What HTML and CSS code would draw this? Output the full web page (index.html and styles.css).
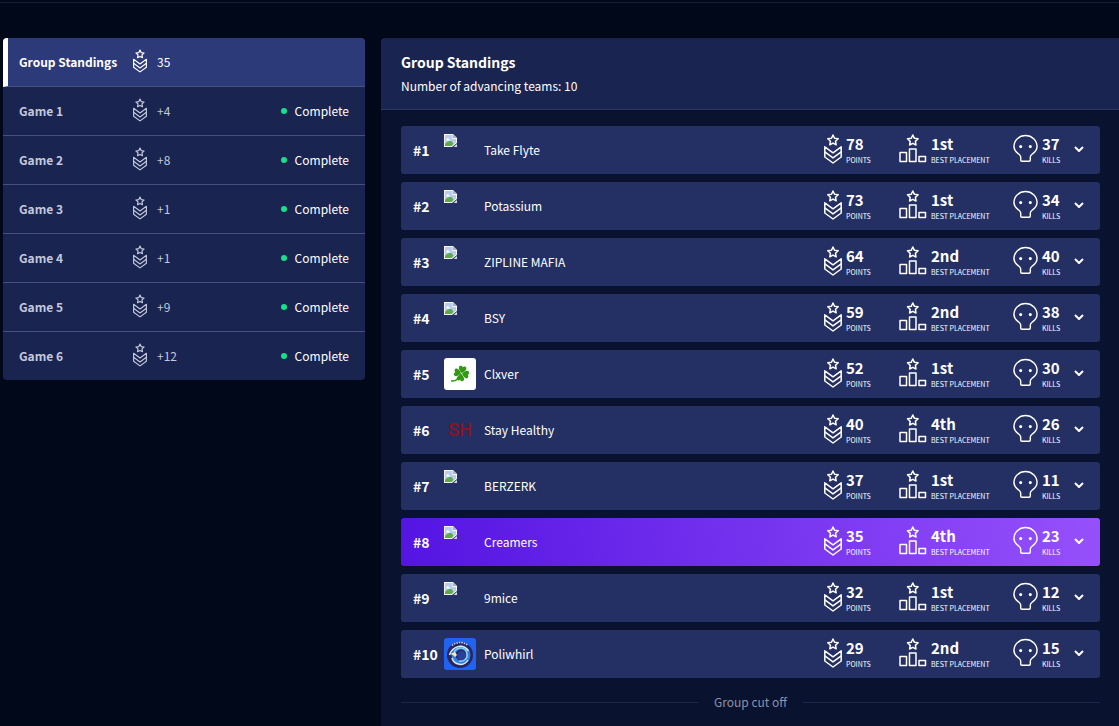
FILE: index.html
```
<!DOCTYPE html>
<html lang="en">
<head>
    <meta charset="UTF-8">
    <meta name="viewport" content="width=device-width, initial-scale=1.0">
    <title>Group Standings</title>
    <link rel="stylesheet" href="styles.css">
</head>
<body>
    <!-- Shared icons -->
    <svg class="sprite" aria-hidden="true">
        <symbol id="rank" viewBox="0 0 18 30">
            <path d="M9 1l1.500 3.200 3.700.5-2.700 2.500.7 3.600L9 9.100l-3.200 1.700.7-3.600-2.700-2.500 3.700-.5z"/>
            <path d="M.8 12.800v10.200L9 29l8.200-6V12.800L9 18.800z"/>
            <path d="M.8 17.900L9 23.900l8.200-6"/>
        </symbol>
        <symbol id="podium" viewBox="0 0 28 30">
            <path d="M13.800 1l1.600 3.300 3.700.5-2.700 2.600.6 3.600-3.200-1.700-3.200 1.700.6-3.600-2.700-2.600 3.700-.5z"/>
            <path d="M1 18.500h6.500v9H1zM10.500 15H17v12.500h-6.500zM20 22.500h6.500v5H20z"/>
        </symbol>
        <symbol id="skull" viewBox="0 0 26 30">
            <path d="M8 26.500v-3.200c0-1.600-1-2.200-2.600-3.500C2.500 17.700 1 15.500 1 12.500 1 5.900 6.400 1 13 1s12 4.900 12 11.500c0 3-1.500 5.200-4.400 7.300-1.600 1.300-2.600 1.900-2.600 3.500v3.200c0 .8-.4 1.200-1.200 1.200H9.200c-.8 0-1.200-.4-1.200-1.200z"/>
            <circle class="eye" cx="8" cy="12.500" r="1.600"/>
            <circle class="eye" cx="18" cy="12.500" r="1.600"/>
        </symbol>
        <symbol id="chevron" viewBox="0 0 10 6">
            <path d="M1 1l4 4 4-4"/>
        </symbol>
        <symbol id="missing" viewBox="0 0 14 14">
            <path fill="#f4f6fa" d="M0 0h9l4 4v5L8 13H0z"/>
            <path fill="#b9cdf0" d="M1 1h7.500v4H12v3.500L7.500 12H1z"/>
            <path fill="#fff" d="M2.500 5.500c0-1.500 2-1.500 2.300-.5 1.200 0 1.200 1.500.2 1.500H3c-.5 0-.8-.5-.5-1z"/>
            <path fill="#5fa84c" d="M1 12V10c2-2.500 4.500-3.500 7-2.500l1.500 2.500L7.500 12z"/>
            <path fill="#a9b3c6" d="M9 0l4 4H9z"/>
            <path fill="#d5dae6" d="M9.500 13l3.500-3v3z"/>
        </symbol>
    </svg>

    <main class="page">
        <!-- Game list -->
        <nav class="games">
            <a href="#standings" class="game active">
                <span class="game-name">Group Standings</span>
                <svg class="game-icon"><use href="#rank"/></svg>
                <span class="game-points">35</span>
            </a>
            <a href="#game1" class="game">
                <span class="game-name">Game 1</span>
                <svg class="game-icon"><use href="#rank"/></svg>
                <span class="game-points">+4</span>
                <span class="status">Complete</span>
            </a>
            <a href="#game2" class="game">
                <span class="game-name">Game 2</span>
                <svg class="game-icon"><use href="#rank"/></svg>
                <span class="game-points">+8</span>
                <span class="status">Complete</span>
            </a>
            <a href="#game3" class="game">
                <span class="game-name">Game 3</span>
                <svg class="game-icon"><use href="#rank"/></svg>
                <span class="game-points">+1</span>
                <span class="status">Complete</span>
            </a>
            <a href="#game4" class="game">
                <span class="game-name">Game 4</span>
                <svg class="game-icon"><use href="#rank"/></svg>
                <span class="game-points">+1</span>
                <span class="status">Complete</span>
            </a>
            <a href="#game5" class="game">
                <span class="game-name">Game 5</span>
                <svg class="game-icon"><use href="#rank"/></svg>
                <span class="game-points">+9</span>
                <span class="status">Complete</span>
            </a>
            <a href="#game6" class="game">
                <span class="game-name">Game 6</span>
                <svg class="game-icon"><use href="#rank"/></svg>
                <span class="game-points">+12</span>
                <span class="status">Complete</span>
            </a>
        </nav>

        <!-- Standings -->
        <section class="standings" id="standings">
            <header class="standings-header">
                <h1>Group Standings</h1>
                <p>Number of advancing teams: 10</p>
            </header>

            <div class="teams">
                <div class="team">
                    <span class="place">#1</span>
                    <svg class="logo missing"><use href="#missing"/></svg>
                    <span class="team-name">Take Flyte</span>
                    <div class="stat"><svg class="rank"><use href="#rank"/></svg><div><b>78</b><small>POINTS</small></div></div>
                    <div class="stat"><svg class="podium"><use href="#podium"/></svg><div><b>1st</b><small>BEST PLACEMENT</small></div></div>
                    <div class="stat"><svg class="skull"><use href="#skull"/></svg><div><b>37</b><small>KILLS</small></div></div>
                    <button type="button" class="toggle" aria-label="Show Take Flyte"><svg><use href="#chevron"/></svg></button>
                </div>
                <div class="team">
                    <span class="place">#2</span>
                    <svg class="logo missing"><use href="#missing"/></svg>
                    <span class="team-name">Potassium</span>
                    <div class="stat"><svg class="rank"><use href="#rank"/></svg><div><b>73</b><small>POINTS</small></div></div>
                    <div class="stat"><svg class="podium"><use href="#podium"/></svg><div><b>1st</b><small>BEST PLACEMENT</small></div></div>
                    <div class="stat"><svg class="skull"><use href="#skull"/></svg><div><b>34</b><small>KILLS</small></div></div>
                    <button type="button" class="toggle" aria-label="Show Potassium"><svg><use href="#chevron"/></svg></button>
                </div>
                <div class="team">
                    <span class="place">#3</span>
                    <svg class="logo missing"><use href="#missing"/></svg>
                    <span class="team-name">ZIPLINE MAFIA</span>
                    <div class="stat"><svg class="rank"><use href="#rank"/></svg><div><b>64</b><small>POINTS</small></div></div>
                    <div class="stat"><svg class="podium"><use href="#podium"/></svg><div><b>2nd</b><small>BEST PLACEMENT</small></div></div>
                    <div class="stat"><svg class="skull"><use href="#skull"/></svg><div><b>40</b><small>KILLS</small></div></div>
                    <button type="button" class="toggle" aria-label="Show ZIPLINE MAFIA"><svg><use href="#chevron"/></svg></button>
                </div>
                <div class="team">
                    <span class="place">#4</span>
                    <svg class="logo missing"><use href="#missing"/></svg>
                    <span class="team-name">BSY</span>
                    <div class="stat"><svg class="rank"><use href="#rank"/></svg><div><b>59</b><small>POINTS</small></div></div>
                    <div class="stat"><svg class="podium"><use href="#podium"/></svg><div><b>2nd</b><small>BEST PLACEMENT</small></div></div>
                    <div class="stat"><svg class="skull"><use href="#skull"/></svg><div><b>38</b><small>KILLS</small></div></div>
                    <button type="button" class="toggle" aria-label="Show BSY"><svg><use href="#chevron"/></svg></button>
                </div>
                <div class="team">
                    <span class="place">#5</span>
                    <svg class="logo" viewBox="0 0 32 32">
                        <rect width="32" height="32" fill="#fff"/>
                        <g fill="#2f9a12" transform="rotate(12 17.500 15.500)">
                            <path id="leaf" d="M17.500 15c-2-1.500-4-3.500-3.800-5.200.2-1.800 2.600-2.400 3.800-.6 1.200-1.800 3.600-1.200 3.800.6.200 1.700-1.800 3.700-3.800 5.200z"/>
                            <use href="#leaf" transform="rotate(90 17.500 15.500)"/>
                            <use href="#leaf" transform="rotate(180 17.500 15.500)"/>
                            <use href="#leaf" transform="rotate(270 17.500 15.500)"/>
                        </g>
                        <path fill="none" stroke="#2f9a12" d="M17 16c-2 5-5 7.500-10 7"/>
                    </svg>
                    <span class="team-name">Clxver</span>
                    <div class="stat"><svg class="rank"><use href="#rank"/></svg><div><b>52</b><small>POINTS</small></div></div>
                    <div class="stat"><svg class="podium"><use href="#podium"/></svg><div><b>1st</b><small>BEST PLACEMENT</small></div></div>
                    <div class="stat"><svg class="skull"><use href="#skull"/></svg><div><b>30</b><small>KILLS</small></div></div>
                    <button type="button" class="toggle" aria-label="Show Clxver"><svg><use href="#chevron"/></svg></button>
                </div>
                <div class="team">
                    <span class="place">#6</span>
                    <span class="logo initials">SH</span>
                    <span class="team-name">Stay Healthy</span>
                    <div class="stat"><svg class="rank"><use href="#rank"/></svg><div><b>40</b><small>POINTS</small></div></div>
                    <div class="stat"><svg class="podium"><use href="#podium"/></svg><div><b>4th</b><small>BEST PLACEMENT</small></div></div>
                    <div class="stat"><svg class="skull"><use href="#skull"/></svg><div><b>26</b><small>KILLS</small></div></div>
                    <button type="button" class="toggle" aria-label="Show Stay Healthy"><svg><use href="#chevron"/></svg></button>
                </div>
                <div class="team">
                    <span class="place">#7</span>
                    <svg class="logo missing"><use href="#missing"/></svg>
                    <span class="team-name">BERZERK</span>
                    <div class="stat"><svg class="rank"><use href="#rank"/></svg><div><b>37</b><small>POINTS</small></div></div>
                    <div class="stat"><svg class="podium"><use href="#podium"/></svg><div><b>1st</b><small>BEST PLACEMENT</small></div></div>
                    <div class="stat"><svg class="skull"><use href="#skull"/></svg><div><b>11</b><small>KILLS</small></div></div>
                    <button type="button" class="toggle" aria-label="Show BERZERK"><svg><use href="#chevron"/></svg></button>
                </div>
                <div class="team own">
                    <span class="place">#8</span>
                    <svg class="logo missing"><use href="#missing"/></svg>
                    <span class="team-name">Creamers</span>
                    <div class="stat"><svg class="rank"><use href="#rank"/></svg><div><b>35</b><small>POINTS</small></div></div>
                    <div class="stat"><svg class="podium"><use href="#podium"/></svg><div><b>4th</b><small>BEST PLACEMENT</small></div></div>
                    <div class="stat"><svg class="skull"><use href="#skull"/></svg><div><b>23</b><small>KILLS</small></div></div>
                    <button type="button" class="toggle" aria-label="Show Creamers"><svg><use href="#chevron"/></svg></button>
                </div>
                <div class="team">
                    <span class="place">#9</span>
                    <svg class="logo missing"><use href="#missing"/></svg>
                    <span class="team-name">9mice</span>
                    <div class="stat"><svg class="rank"><use href="#rank"/></svg><div><b>32</b><small>POINTS</small></div></div>
                    <div class="stat"><svg class="podium"><use href="#podium"/></svg><div><b>1st</b><small>BEST PLACEMENT</small></div></div>
                    <div class="stat"><svg class="skull"><use href="#skull"/></svg><div><b>12</b><small>KILLS</small></div></div>
                    <button type="button" class="toggle" aria-label="Show 9mice"><svg><use href="#chevron"/></svg></button>
                </div>
                <div class="team">
                    <span class="place">#10</span>
                    <svg class="logo" viewBox="0 0 32 32">
                        <rect width="32" height="32" fill="#1f63f0"/>
                        <circle cx="16" cy="17" r="13" fill="#2b2559"/>
                        <path fill="none" stroke="#d9d3e8" stroke-dasharray="1.500 1" d="M8 7.500c4.500-4 11.500-4 16 0"/>
                        <circle cx="17" cy="17" r="7.500" fill="none" stroke="#2f7fe0" stroke-width="4"/>
                        <circle cx="17.500" cy="17.500" r="4.500" fill="#2a3f9c"/>
                        <path fill="none" stroke="#d8ecff" d="M5.500 17c3-9 13-12 19-4M8 20c2 7 12 9 16 2"/>
                        <path fill="none" stroke="#8fd0f5" d="M10 14c4-6 12-5 13 2 1 5-4 8-8 7"/>
                        <path fill="#f0e9c8" d="M6 16l5-2 2 3-2 2-2-2z"/>
                    </svg>
                    <span class="team-name">Poliwhirl</span>
                    <div class="stat"><svg class="rank"><use href="#rank"/></svg><div><b>29</b><small>POINTS</small></div></div>
                    <div class="stat"><svg class="podium"><use href="#podium"/></svg><div><b>2nd</b><small>BEST PLACEMENT</small></div></div>
                    <div class="stat"><svg class="skull"><use href="#skull"/></svg><div><b>15</b><small>KILLS</small></div></div>
                    <button type="button" class="toggle" aria-label="Show Poliwhirl"><svg><use href="#chevron"/></svg></button>
                </div>
                <div class="cutoff">Group cut off</div>
            </div>
        </section>
    </main>
</body>
</html>
```
FILE: styles.css
```
* {
    box-sizing: border-box;
}
body {
    margin: 0;
    padding-top: 2px;
    background-color: #000819;
    color: #fff;
    font-family: "Noto Sans CJK SC", "Noto Sans", sans-serif;
    font-size: 12px;
    line-height: 16px;
}
.sprite {
    display: none;
}
svg {
    display: block;
    fill: none;
    stroke: currentColor;
    stroke-width: 1.5;
    stroke-linejoin: round;
}
.page {
    display: grid;
    grid-template-columns: 362px 1fr;
    gap: 16px;
    align-items: start;
    min-height: calc(100vh - 2px);
    padding: 35px 0 0 3px;
    border-top: 1px solid #141c33;
}

/* Game list */
.games {
    border-radius: 4px;
    overflow: hidden;
    background-color: #1a2450;
}
.game {
    display: grid;
    grid-template-columns: 114px 14px 1fr auto;
    align-items: center;
    height: 49px;
    padding: 0 16px;
    border-bottom: 1px solid #474f7e;
    color: #c3c8dc;
    text-decoration: none;
}
.game:last-child {
    height: 48px;
    border-bottom: none;
}
.game.active {
    padding-left: 11px;
    border-left: 5px solid #fff;
    background-color: #2d3a7a;
    color: #fff;
}
.game-name {
    font-weight: bold;
}
.game-icon {
    width: 14px;
    height: 24px;
    margin-bottom: 2px;
}
.game-points {
    padding-left: 10px;
}
.status {
    display: flex;
    align-items: center;
    gap: 8px;
    color: #fff;
}
.status::before {
    content: "";
    width: 6px;
    height: 6px;
    border-radius: 50%;
    background-color: #16e08c;
}

/* Standings */
.standings {
    align-self: stretch;
    border-radius: 4px 0 0 0;
    overflow: hidden;
    background-color: #09122e;
}
.standings-header {
    padding: 13px 20px 15px;
    border-bottom: 1px solid #2d3763;
    background-color: #1a2450;
}
.standings-header h1 {
    margin: 0 0 5px;
    font-size: 14px;
    line-height: 22px;
}
.standings-header p {
    margin: 0;
}
.teams {
    display: flex;
    flex-direction: column;
    gap: 8px;
    padding: 16px 19px 16px 20px;
}
.team {
    display: grid;
    grid-template-columns: 31px 32px 1fr 75px 114px 61px 10px;
    align-items: center;
    height: 48px;
    padding: 0 16px 0 12px;
    border-radius: 3px;
    background-color: #242f64;
}
.team.own {
    background: linear-gradient(80deg, #5414e2, #9650fb);
}
.place {
    font-size: 14px;
    font-weight: bold;
}
.logo {
    width: 32px;
    height: 32px;
    border-radius: 3px;
    stroke: none;
}
.logo.missing {
    align-self: start;
    width: 14px;
    height: 14px;
    margin-top: 8px;
    border-radius: 0;
}
.initials {
    color: #8a1423;
    font-family: Roboto, sans-serif;
    font-size: 18px;
    font-weight: 500;
    line-height: 32px;
    text-align: center;
}
.team-name {
    padding-left: 8px;
}
.stat {
    display: flex;
    align-items: center;
    gap: 4px;
}
.stat svg {
    margin-bottom: 2px;
}
.stat b {
    display: block;
    font-size: 15px;
    line-height: 20px;
}
.stat small {
    display: block;
    font-size: 7px;
    line-height: 12px;
    white-space: nowrap;
}
.rank {
    width: 18px;
    height: 30px;
}
.podium {
    width: 28px;
    height: 30px;
}
.skull {
    width: 25px;
    height: 30px;
}
.eye {
    fill: currentColor;
    stroke: none;
}
.toggle {
    padding: 0 0 2px;
    border: none;
    background: none;
    color: #fff;
    cursor: pointer;
}
.toggle svg {
    width: 10px;
    height: 6px;
    stroke-width: 2;
}
.cutoff {
    display: flex;
    align-items: center;
    gap: 16px;
    padding-top: 8px;
    color: #8c92a8;
}
.cutoff::before,
.cutoff::after {
    content: "";
    flex: 1;
    border-top: 1px solid #1e2745;
}
```
